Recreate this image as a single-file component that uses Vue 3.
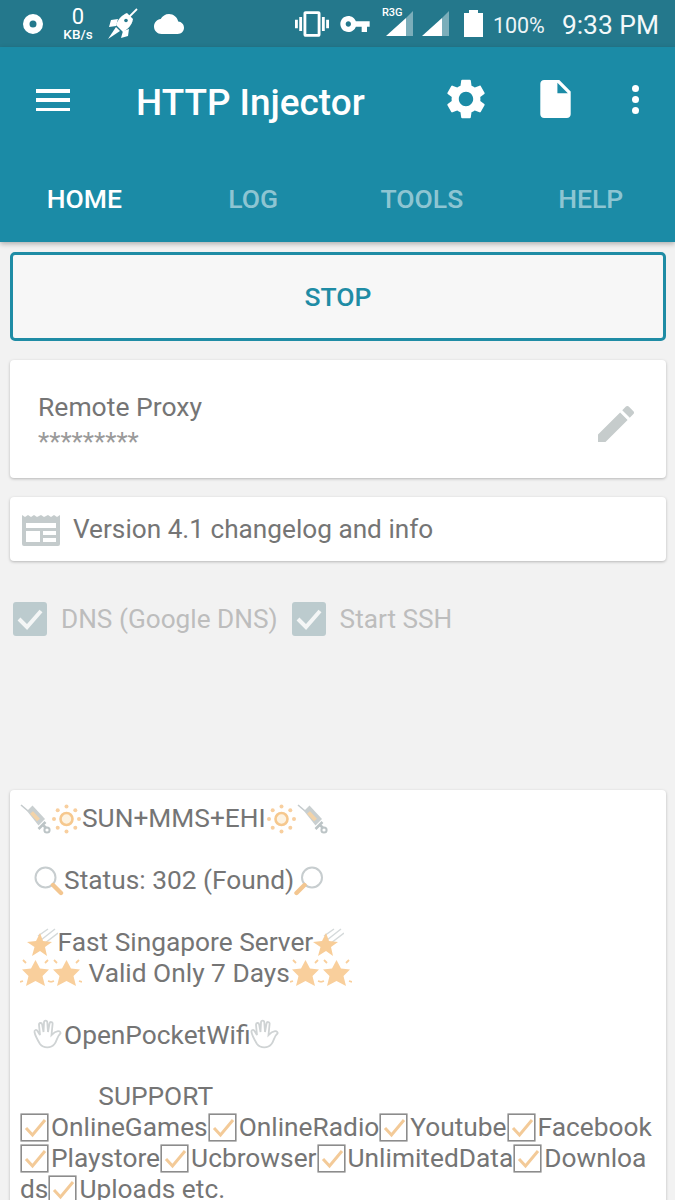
<template>
  <div class="screen">
    <svg class="defs" aria-hidden="true">
      <symbol id="check" viewBox="0 0 31 31">
        <rect x="1.2" y="2.2" width="26.6" height="26.6" fill="#fff" stroke="#8c8c8c" stroke-width="1.6" />
        <path d="M6 16l6.500 7L25 8" fill="none" stroke="#f3ca98" stroke-width="3" />
      </symbol>
      <symbol id="sun" viewBox="0 0 31 31">
        <circle cx="15.500" cy="16" r="6" fill="#fdf3e2" stroke="#f6c88e" stroke-width="2.600" />
        <g fill="#f8cf9f">
          <circle cx="15.500" cy="3.500" r="2" />
          <circle cx="15.500" cy="28.500" r="2" />
          <circle cx="3" cy="16" r="2" />
          <circle cx="28" cy="16" r="2" />
          <circle cx="6.700" cy="7.200" r="2" />
          <circle cx="24.300" cy="7.200" r="2" />
          <circle cx="6.700" cy="24.800" r="2" />
          <circle cx="24.300" cy="24.800" r="2" />
        </g>
      </symbol>
      <symbol id="syringe" viewBox="0 0 31 31">
        <path d="M1 2l7 6" stroke="#c4cacc" stroke-width="1.600" />
        <path d="M7 8l5.500-5.500L25 16l-6.500 6.500z" fill="#c9cfd0" />
        <path d="M11.500 9.500l7 7.500" stroke="#f3d3a8" stroke-width="4" />
        <path d="M22 21l4 4M25.500 19l-7 7" stroke="#bcc4c6" stroke-width="2.600" />
        <circle cx="27" cy="27" r="2.600" fill="#fff" stroke="#bcc4c6" stroke-width="2" />
      </symbol>
      <symbol id="lens" viewBox="0 0 31 31">
        <circle cx="12.500" cy="12.500" r="10" fill="#fff" stroke="#c7cdcf" stroke-width="2" />
        <path d="M20 20l8 8" stroke="#f3c690" stroke-width="4.400" stroke-linecap="round" />
      </symbol>
      <symbol id="lensR" viewBox="0 0 31 31">
        <circle cx="18" cy="12.500" r="10" fill="#fff" stroke="#c7cdcf" stroke-width="2" />
        <path d="M10.500 20l-8 8" stroke="#f3c690" stroke-width="4.400" stroke-linecap="round" />
      </symbol>
      <symbol id="comet" viewBox="0 0 31 31">
        <path d="M14 13L28 2M18 16L31 6M11 9L21 2" stroke="#d5dadb" stroke-width="1.500" fill="none" />
        <polygon points="13,6 16,14 25,15 18,20 20,29 13,24 5,29 7.500,20 0,15 9,14" fill="#f8cd98" />
      </symbol>
      <symbol id="burst" viewBox="0 0 31 31">
        <polygon points="15.500,3 20,11.500 29,12.500 22.500,19 25,29 15.500,24 6,29 8.500,19 2,12.500 11,11.500" fill="#f9cf9c" />
        <path d="M3 3l3 3M28 3l-3 3M0 25l3-1M31 25l-3-1" stroke="#f9cf9c" stroke-width="1.800" />
      </symbol>
      <symbol id="hand" viewBox="0 0 31 31">
        <path d="M7 25C4 20 2 16 1.500 13c-.4-2 2-3 3-1L7 16 6 6c-.2-2.400 2.800-2.800 3.200-.4L10.500 13 11 3.500c.1-2.400 3.200-2.400 3.300 0L15 13l1.500-8.500c.5-2.300 3.400-1.800 3.100.5L18.500 16c2-2 4-3.500 6.500-3.800 1.800-.2 3.500 1.500 2 2.800C24 17.500 24 22 21.500 25c-3.500 4.500-11 4.500-14.500 0z" fill="#fff" stroke="#cfd3d4" stroke-width="1.800" />
      </symbol>
    </svg>

    <div class="status-bar">
      <div class="status-left">
        <svg class="st-disc" viewBox="0 0 20 20"><path fill-rule="evenodd" d="M10 0a10 10 0 1 0 0 20 10 10 0 0 0 0-20zm0 6.500a3.500 3.500 0 1 1 0 7 3.500 3.500 0 0 1 0-7z" fill="#fff" /></svg>
        <div class="speed">
          <span class="speed-num">0</span>
          <span class="speed-unit">KB/s</span>
        </div>
        <svg class="st-rocket" viewBox="0 0 30 32">
          <path d="M29 1L21 9" stroke="#fff" stroke-width="1.800" />
          <path d="M19 5l6 6c-1 6-5 10-10 13l-7-7c2-6 6-10 11-12z" fill="#fff" />
          <path d="M10 11L3 12 1 19l7-1zM21 21l-1 7-7 2 2-7z" fill="#fff" />
          <path d="M8 19l4 4-12 8z" fill="#fff" />
          <circle cx="18" cy="12.500" r="1.800" fill="#24788c" />
        </svg>
        <svg class="st-cloud" viewBox="0 0 24 24"><path d="M19.350 10.040C18.670 6.590 15.640 4 12 4 9.110 4 6.600 5.640 5.350 8.040 2.340 8.360 0 10.910 0 14c0 3.310 2.690 6 6 6h13c2.760 0 5-2.240 5-5 0-2.640-2.050-4.780-4.650-4.960z" fill="#fff" /></svg>
      </div>
      <div class="status-right">
        <svg class="st-vibrate" viewBox="0 0 24 24"><path d="M0 15h2V9H0v6zm3 2h2V7H3v10zm19-8v6h2V9h-2zm-3 8h2V7h-2v10zM16.500 3h-9C6.670 3 6 3.670 6 4.500v15c0 .83.670 1.500 1.500 1.500h9c.83 0 1.500-.67 1.500-1.500v-15c0-.83-.67-1.500-1.500-1.500zM16 19H8V5h8v14z" fill="#fff" /></svg>
        <svg class="st-key" viewBox="1 6 22 12"><path d="M12.650 10C11.830 7.670 9.610 6 7 6c-3.310 0-6 2.690-6 6s2.690 6 6 6c2.610 0 4.830-1.670 5.650-4H17v4h4v-4h2v-4H12.650zM7 14c-1.100 0-2-.9-2-2s.9-2 2-2 2 .9 2 2-.9 2-2 2z" fill="#fff" /></svg>
        <div class="st-signal r3g">
          <span>R3G</span>
          <svg viewBox="0 0 27 27"><polygon points="0,26 20,8 20,26" fill="#fff" /><polygon points="20,8 27,1 27,26 20,26" fill="#fff" opacity=".4" /></svg>
        </div>
        <svg class="st-bars" viewBox="0 0 27 27"><polygon points="0,26 20,8 20,26" fill="#fff" /><polygon points="20,8 27,1 27,26 20,26" fill="#fff" opacity=".4" /></svg>
        <svg class="st-battery" viewBox="0 0 19 27"><path d="M5 0h9v3h5v24H0V3h5z" fill="#fff" /></svg>
        <span class="st-percent">100%</span>
        <span class="st-time">9:33 PM</span>
      </div>
    </div>

    <header class="app-bar">
      <div class="toolbar">
        <div class="menu-btn"><i></i><i></i><i></i></div>
        <h1>HTTP Injector</h1>
        <div class="actions">
          <svg class="ic-gear" viewBox="0 0 24 24"><path d="M19.140 12.940c.04-.3.06-.61.06-.94 0-.32-.02-.64-.07-.94l2.030-1.580c.18-.14.23-.41.12-.61l-1.920-3.320c-.12-.22-.37-.29-.59-.22l-2.390.96c-.5-.38-1.030-.7-1.620-.94l-.36-2.540c-.04-.24-.24-.41-.48-.41h-3.840c-.24 0-.43.17-.47.41l-.36 2.540c-.59.24-1.130.57-1.620.94l-2.390-.96c-.22-.08-.47 0-.59.22L2.740 8.870c-.12.21-.08.47.12.61l2.030 1.580c-.05.3-.09.63-.09.94s.02.64.07.94l-2.030 1.580c-.18.14-.23.41-.12.61l1.920 3.320c.12.22.37.29.59.22l2.390-.96c.5.38 1.030.7 1.620.94l.36 2.540c.05.24.24.41.48.41h3.840c.24 0 .44-.17.47-.41l.36-2.540c.59-.24 1.130-.56 1.620-.94l2.390.96c.22.08.47 0 .59-.22l1.920-3.320c.12-.22.07-.47-.12-.61l-2.010-1.580zM12 15.600c-1.980 0-3.600-1.620-3.600-3.600s1.620-3.600 3.600-3.600 3.600 1.620 3.600 3.600-1.620 3.600-3.600 3.600z" fill="#fff" /></svg>
          <svg class="ic-file" viewBox="4 2 16 20"><path d="M6 2c-1.100 0-1.990.9-1.990 2L4 20c0 1.100.89 2 1.990 2H18c1.100 0 2-.9 2-2V8l-6-6H6zm7 7V3.500L18.500 9H13z" fill="#fff" /></svg>
          <div class="ic-dots"><i></i><i></i><i></i></div>
        </div>
      </div>
      <nav class="tabs">
        <span v-for="(tab, i) in tabs" :key="tab" :class="['tab', { active: i === 0 }]">{{ tab }}</span>
      </nav>
    </header>

    <main class="content">
      <button class="stop-btn">STOP</button>

      <section class="card proxy">
        <div class="proxy-text">
          <div class="proxy-name">Remote Proxy</div>
          <div class="proxy-value">*********</div>
        </div>
        <svg class="ic-pencil" viewBox="3 3 18 18"><path d="M3 17.250V21h3.750L17.810 9.940l-3.750-3.750L3 17.250zM20.710 7.040c.39-.39.39-1.020 0-1.410l-2.340-2.340c-.39-.39-1.020-.39-1.410 0l-1.830 1.830 3.750 3.750 1.830-1.830z" fill="#c6cccc" /></svg>
      </section>

      <section class="card changelog">
        <svg class="ic-news" viewBox="0 0 38 33">
          <path d="M0 2l3 2 3-2 3 2 3-2 3 2 4-2 3 2 4-2 3 2 3-2 3 2 3-2v29a2 2 0 0 1-2 2H2a2 2 0 0 1-2-2z" fill="#c4cbcc" />
          <path d="M4 10h30v5H4zM4 18h14v11H4zM21 18h13v4H21zM21 25h13v4H21z" fill="#fff" />
        </svg>
        <span>Version 4.1 changelog and info</span>
      </section>

      <div class="options">
        <label class="option">
          <svg class="ic-box" viewBox="0 0 34 34"><rect width="34" height="34" rx="3" fill="#bccbce" /><path d="M6 17l8 8L28 9" fill="none" stroke="#f4f6f6" stroke-width="4" /></svg>
          <span>DNS (Google DNS)</span>
        </label>
        <label class="option">
          <svg class="ic-box" viewBox="0 0 34 34"><rect width="34" height="34" rx="3" fill="#bccbce" /><path d="M6 17l8 8L28 9" fill="none" stroke="#f4f6f6" stroke-width="4" /></svg>
          <span>Start SSH</span>
        </label>
      </div>

      <section class="card notes">
        <div v-for="(line, i) in noteLines" :key="i" class="note-line">
          <template v-for="(part, j) in line" :key="j">
            <svg v-if="part.icon" class="emoji"><use :href="'#' + part.icon" /></svg>
            <span v-else>{{ part.text }}</span>
          </template>
        </div>
      </section>
    </main>
  </div>
</template>

<script setup>
const tabs = ["HOME", "LOG", "TOOLS", "HELP"];

const notes = [
  "{syringe}{sun}SUN+MMS+EHI{sun}{syringe}",
  "",
  "  {lens}Status: 302 (Found){lensR}",
  "",
  " {comet}Fast Singapore Server{comet}",
  "{burst}{burst} Valid Only 7 Days{burst}{burst}",
  "",
  "  {hand}OpenPocketWifi{hand}",
  "",
  "            SUPPORT",
  "{check}OnlineGames{check}OnlineRadio{check}Youtube{check}Facebook",
  "{check}Playstore{check}Ucbrowser{check}UnlimitedData{check}Downloa",
  "ds{check}Uploads etc.",
];

// "{name}" in a line stands for an emoji symbol
const noteLines = notes.map((line) =>
  line
    .split(/\{(\w+)\}/)
    .map((part, i) => (i % 2 ? { icon: part } : { text: part }))
    .filter((part) => part.icon || part.text)
);
</script>

<style>
html,
body {
  margin: 0;
  background: #f2f2f2;
}
</style>

<style scoped>
.screen {
  width: 675px;
  height: 1200px;
  overflow: hidden;
  background: #f2f2f2;
  font-family: Roboto, "Liberation Sans", sans-serif;
  color: #757575;
}

.defs {
  display: none;
}

.status-bar {
  height: 47px;
  background: #24788c;
  display: flex;
  justify-content: space-between;
  align-items: center;
  padding: 0 16px 0 23px;
  color: #fff;
}

.status-left,
.status-right {
  display: flex;
  align-items: center;
}

.st-disc {
  width: 20px;
  height: 20px;
}

.speed {
  width: 34px;
  margin-left: 18px;
  display: flex;
  flex-direction: column;
  align-items: center;
  line-height: 1;
}

.speed-num {
  font-size: 22px;
  height: 22px;
}

.speed-unit {
  font-size: 13.5px;
  font-weight: 500;
}

.st-rocket {
  width: 30px;
  height: 32px;
  margin-left: 13px;
}

.st-cloud {
  width: 30px;
  height: 30px;
  margin-left: 16px;
}

.st-vibrate {
  width: 34px;
  height: 34px;
}

.st-key {
  width: 30px;
  height: 16px;
  margin-left: 11px;
}

.st-signal {
  position: relative;
  margin-left: 16px;
  width: 27px;
  height: 27px;
}

.st-signal svg,
.st-bars {
  display: block;
  width: 27px;
  height: 27px;
}

.r3g span {
  position: absolute;
  left: -4px;
  top: -4px;
  font-size: 11px;
  font-weight: 500;
}

.st-bars {
  margin-left: 9px;
}

.st-battery {
  width: 19px;
  height: 27px;
  margin-left: 15px;
}

.st-percent {
  font-size: 21.5px;
  margin-left: 10px;
  padding-top: 3px;
  opacity: 0.92;
}

.st-time {
  font-size: 26.4px;
  margin-left: 17px;
  padding-top: 3px;
  opacity: 0.95;
}

.app-bar {
  height: 195px;
  background: #1b8ba6;
  box-shadow: 0 2px 5px rgba(0, 0, 0, 0.28);
  position: relative;
  color: #fff;
}

.toolbar {
  height: 108px;
  display: flex;
  align-items: center;
  padding-left: 36px;
}

.menu-btn {
  width: 34px;
  height: 22px;
  margin-top: -2px;
  display: flex;
  flex-direction: column;
  justify-content: space-between;
}

.menu-btn i {
  height: 3.5px;
  background: #fff;
}

h1 {
  margin: 2px 0 0 66px;
  font-size: 36.9px;
  font-weight: 500;
  white-space: nowrap;
}

.actions {
  display: flex;
  align-items: center;
  margin-left: 77px;
}

.ic-gear {
  width: 48px;
  height: 48px;
  margin-top: -4px;
}

.ic-file {
  width: 31px;
  height: 38px;
  margin-left: 50px;
  margin-top: -4px;
}

.ic-dots {
  margin-left: 61px;
  margin-top: -4px;
  display: flex;
  flex-direction: column;
  gap: 4px;
}

.ic-dots i {
  width: 7px;
  height: 7px;
  border-radius: 50%;
  background: #fff;
}

.tabs {
  height: 87px;
  display: grid;
  grid-template-columns: repeat(4, 1fr);
}

.tab {
  text-align: center;
  font-size: 26.5px;
  font-weight: 500;
  line-height: 87px;
  color: rgba(255, 255, 255, 0.52);
}

.tab.active {
  color: #fff;
}

.content {
  padding: 10px 9px 0 10px;
  display: flex;
  flex-direction: column;
}

.stop-btn {
  height: 89px;
  border: 3px solid #1f8ca5;
  border-radius: 5px;
  background: #f7f7f7;
  color: #1f8ca5;
  font-family: inherit;
  font-size: 26.5px;
  font-weight: 500;
  padding: 0;
}

.card {
  background: #fff;
  border-radius: 4px;
  box-shadow: 0 1px 3px rgba(0, 0, 0, 0.25);
}

.proxy {
  height: 118px;
  margin-top: 19px;
  padding: 0 32px 0 28px;
  display: flex;
  align-items: center;
  justify-content: space-between;
  box-sizing: border-box;
}

.proxy-text {
  padding-top: 8px;
}

.proxy-name {
  font-size: 26.5px;
  line-height: 32px;
}

.proxy-value {
  font-size: 26px;
  line-height: 26px;
  margin-top: 6px;
  color: #9a9a9a;
}

.ic-pencil {
  width: 36px;
  height: 36px;
  margin-top: 10px;
}

.changelog {
  height: 64px;
  margin-top: 19px;
  padding-left: 12px;
  display: flex;
  align-items: center;
  font-size: 26.2px;
}

.ic-news {
  width: 38px;
  height: 33px;
  margin-right: 13px;
}

.options {
  height: 34px;
  margin-top: 41px;
  padding-left: 3px;
  display: flex;
  align-items: center;
  gap: 14px;
  color: #bdbdbd;
  font-size: 26.2px;
}

.option {
  display: flex;
  align-items: center;
  gap: 14px;
}

.ic-box {
  width: 34px;
  height: 34px;
}

.notes {
  margin-top: 154px;
  height: 420px;
  padding: 13px 0 0 10px;
  font-size: 26.3px;
  overflow: hidden;
}

.note-line {
  height: 30.9px;
  display: flex;
  align-items: center;
  white-space: pre;
}

.emoji {
  width: 31px;
  height: 31px;
  flex: none;
}
</style>
